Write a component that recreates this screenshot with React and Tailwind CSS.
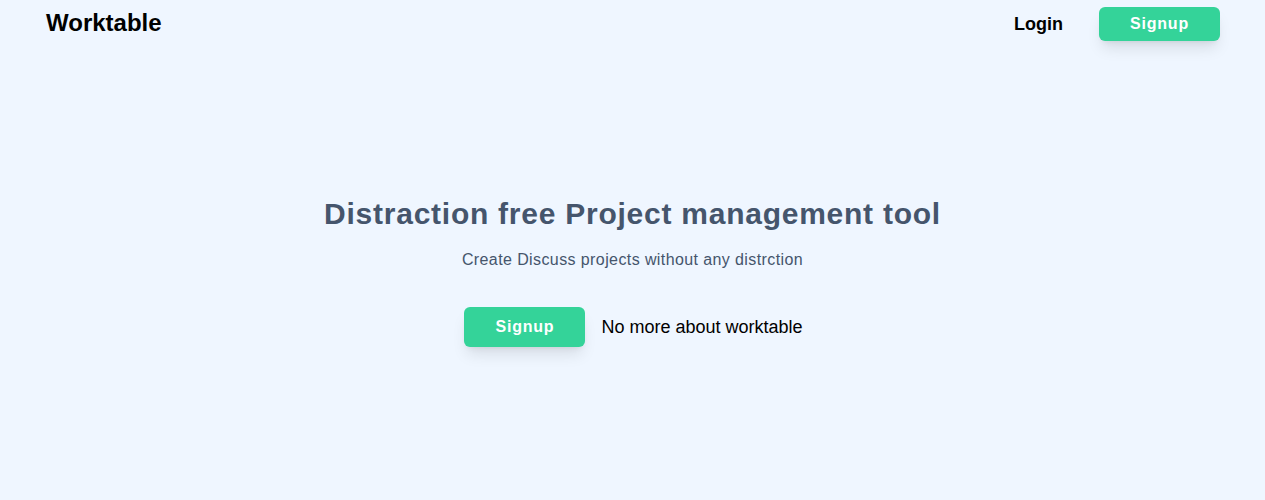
export default function App() {
  return (
    <div className="min-h-screen bg-blue-50 font-['Liberation_Sans',Arial,sans-serif]">
      <header className="h-12 flex items-center justify-between pl-[46px] pr-[45px]">
        <div className="text-2xl font-bold text-black -mt-0.5">Worktable</div>
        <nav className="flex items-center gap-9">
          <a className="text-lg font-bold text-black">Login</a>
          <button className="w-[121px] py-[5px] rounded-md bg-[#34d399] text-white font-bold tracking-wider shadow-lg">
            Signup
          </button>
        </nav>
      </header>
      <main className="pt-[148px] flex flex-col items-center">
        <h1 className="text-3xl font-bold tracking-wide text-slate-600">
          Distraction free Project management tool
        </h1>
        <p className="mt-4 text-base tracking-wide text-slate-600">Create Discuss projects without any distrction</p>
        <div className="mt-[35px] flex items-center gap-4 pl-0.5">
          <button className="w-[121px] py-2 rounded-md bg-[#34d399] text-white font-bold tracking-wider shadow-lg">
            Signup
          </button>
          <span className="text-lg text-black">No more about worktable</span>
        </div>
      </main>
    </div>
  )
}
